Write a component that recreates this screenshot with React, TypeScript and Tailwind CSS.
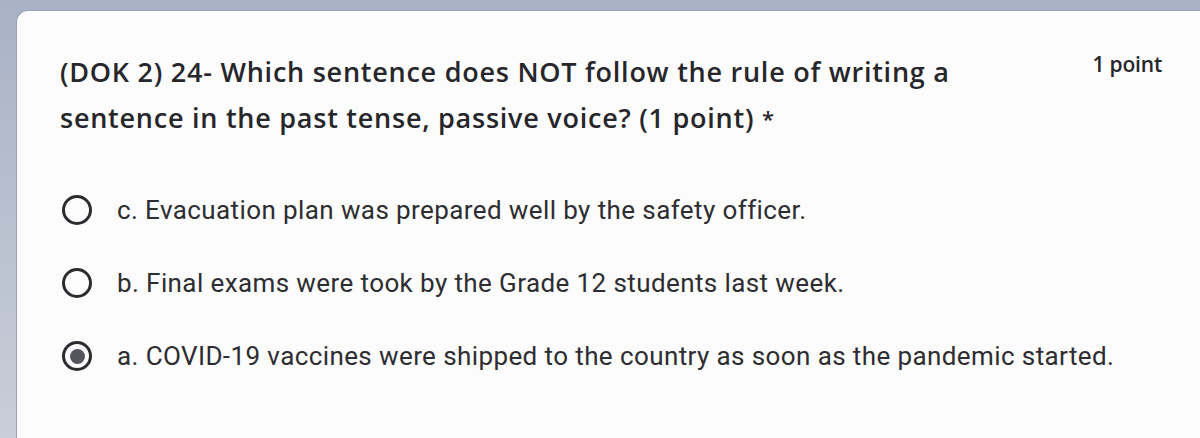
const options = [
  { label: "c. Evacuation plan was prepared well by the safety officer.", checked: false },
  { label: "b. Final exams were took by the Grade 12 students last week.", checked: false },
  { label: "a. COVID-19 vaccines were shipped to the country as soon as the pandemic started.", checked: true },
];

function Radio({ checked }: { checked: boolean }) {
  return (
    <span className="flex h-[30px] w-[30px] shrink-0 items-center justify-center rounded-full border-[3px] border-[#2b2b30]">
      {checked && <span className="h-[15px] w-[15px] rounded-full bg-[#55555c]" />}
    </span>
  );
}

export default function App() {
  return (
    <div className="h-[438px] w-[1200px] overflow-hidden bg-gradient-to-b from-[#a9b2c6] to-[#c9ced8] pl-[16px] pt-[10px]">
      <div className="h-full rounded-tl-[12px] border-l border-t border-[#9aa2b4] bg-[#fcfcfc] pl-[43px] pr-[38px] pt-[38px] [font-family:'Open_Sans',sans-serif] text-[#26262b]">
        {/* Header */}
        <div className="flex items-start justify-between">
          <h2 className="text-[27px] font-semibold leading-[46px] tracking-[0.75px]">
            (DOK 2) 24- Which sentence does NOT follow the rule of writing a
            <br />
            sentence in the past tense, passive voice? (1 point) <span className="align-top text-[22px]">*</span>
          </h2>
          <span className="text-[21px] font-semibold leading-[30px] tracking-[-0.2px]">1 point</span>
        </div>

        {/* Options */}
        <div className="mt-[54px] flex flex-col gap-[43px] [font-family:Roboto,sans-serif]">
          {options.map((o) => (
            <label key={o.label} className="flex items-center gap-[25px] pl-[2px]">
              <Radio checked={o.checked} />
              <span className="text-[26px] leading-[30px] tracking-[0.4px] text-[#2d2d32]">{o.label}</span>
            </label>
          ))}
        </div>
      </div>
    </div>
  );
}
